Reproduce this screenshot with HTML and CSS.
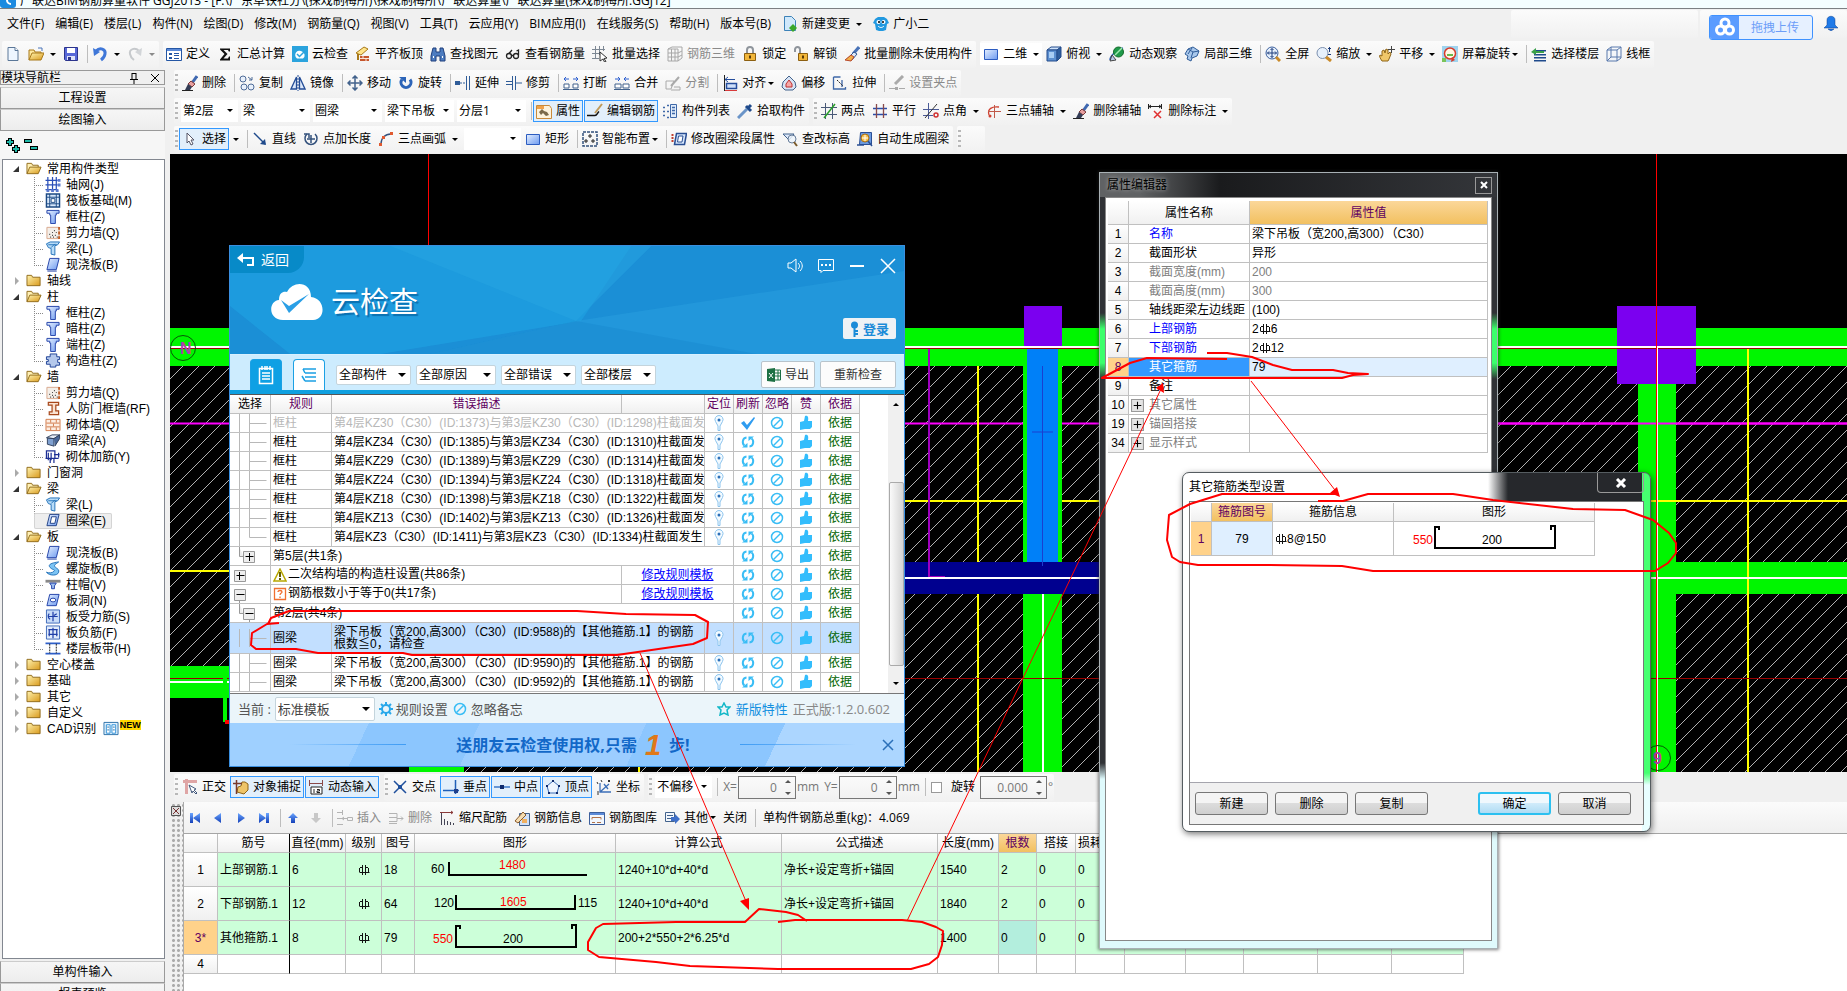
FILE: index.html
```html
<!DOCTYPE html>
<html lang="zh-CN">
<head>
    <meta charset="UTF-8">
    <meta name="viewport" content="width=device-width, initial-scale=1.0">
    <title>广联达BIM钢筋算量软件 GGJ2013</title>
    <link rel="stylesheet" href="styles.css">
</head>
<body>
<svg class="sprite" aria-hidden="true">
    <defs>
        <linearGradient id="gFold" x1="0" y1="0" x2="1" y2="1"><stop offset="0" stop-color="#fff3b0"/><stop offset="1" stop-color="#d99a1c"/></linearGradient>
        <linearGradient id="gBlue" x1="0" y1="0" x2="1" y2="1"><stop offset="0" stop-color="#e4efff"/><stop offset="1" stop-color="#6d9af0"/></linearGradient>
        <linearGradient id="gNav" x1="0" y1="0" x2="0" y2="1"><stop offset="0" stop-color="#6aa5ff"/><stop offset="1" stop-color="#1440b8"/></linearGradient>
        <pattern id="hatch" width="16" height="16" patternUnits="userSpaceOnUse" patternTransform="translate(5 0)"><path d="M-1 17L17-1" stroke="#b0b0b0" fill="none"/></pattern>
    </defs>
    <symbol id="i-new" viewBox="0 0 16 16"><path d="M3 1.500h7l3 3v10H3z" fill="#eef6ff" stroke="#5b7798"/><path d="M10 1.500v3h3" fill="#fff" stroke="#5b7798"/></symbol>
    <symbol id="i-open" viewBox="0 0 16 16"><path d="M1 14V4h5l1 2h6v2" fill="#ffe9a0" stroke="#a87818"/><path d="M1 14l3-7h12l-3 7z" fill="url(#gFold)" stroke="#a87818"/><path d="M10 2h4v3" fill="none" stroke="#4a74b8"/></symbol>
    <symbol id="i-save" viewBox="0 0 16 16"><path d="M1.500 1.500h13v13h-12l-1-1z" fill="#5868d8" stroke="#2c348c"/><path d="M4 2h8v5H4z" fill="#fff"/><path d="M4 10h8v4H4z" fill="#dfe3f8"/><path d="M5 11h3v3H5z" fill="#2c348c"/></symbol>
    <symbol id="i-undo" viewBox="0 0 16 16"><path d="M4 5c4-4 10-2 9 3-.5 3-2 4.500-4 6" fill="none" stroke="#3f77d8" stroke-width="3"/><path d="M1 2l1 8 6-4z" fill="#3f77d8"/></symbol>
    <symbol id="i-redo" viewBox="0 0 16 16"><path d="M12 5C8 1 2 3 3 8c.5 3 2 4.500 4 6" fill="none" stroke="#c6c9cc" stroke-width="2"/><path d="M15 2l-1 8-6-4z" fill="#d2d5d8"/></symbol>
    <symbol id="i-define" viewBox="0 0 16 16"><path d="M.500 2.500h15v12H.500z" fill="#fff" stroke="#2456a4"/><path d="M1 3h14v2H1z" fill="#5b8ad8"/><path d="M3 7h3v2H3zM3 11h3v2H3z" fill="#2456a4"/><path d="M8 7.500h5M8 9.500h5M8 12.500h5" stroke="#2456a4"/></symbol>
    <symbol id="i-sum" viewBox="0 0 16 16"><path d="M3 2.500h10v3h-1.200L11 4H6.500l4 4-4 4.500H11l1-2h1v4H3v-1L7.500 8 3 3.500z" fill="#111"/></symbol>
    <symbol id="i-cloudcheck" viewBox="0 0 16 16"><path d="M0 0h16v16H0z" fill="#2ba3dd"/><path d="M5 12.500a4 4 0 1 1 5-7 4 4 0 0 1 1 7z" fill="#fff"/><path d="M5 8l2.500 2.500L12 6" fill="none" stroke="#2ba3dd" stroke-width="1.500"/></symbol>
    <symbol id="i-slabtop" viewBox="0 0 16 16"><path d="M1 7l8-6 4 2-7 6z" fill="#ffe58a" stroke="#a8791a"/><path d="M5 10h9v5H5z" fill="#c6562c"/><path d="M5 12.500h9M8 10v2.500M11 12.500V15" stroke="#f8e6da"/><path d="M3 8v6" stroke="#a8791a" stroke-width="2"/></symbol>
    <symbol id="i-find" viewBox="0 0 16 16"><path d="M3 2h3v4h4V2h3l2 8v5h-5v-5H6v5H1v-5z" fill="#4d7cc0" stroke="#1f3f7c"/><path d="M3 11h1M12 11h1" stroke="#fff" stroke-width="2"/></symbol>
    <symbol id="i-glasses" viewBox="0 0 16 16"><g fill="none" stroke="#222" stroke-width="1.300"><circle cx="4" cy="10" r="2.500"/><circle cx="11" cy="10" r="2.500"/><path d="M6.500 9.500h2M4 7.500L7 4M13.500 9V4l-2 1"/></g></symbol>
    <symbol id="i-batch" viewBox="0 0 16 16"><path d="M0 3.500h13M0 7.500h8M3.500 0v13M7.500 0v9M11.500 0v5M0 12.500h7" stroke="#7d8894" fill="none"/><path d="M8 6l7 6-3 .500 2 3-1.500.500-1.500-3-3 2z" fill="#fff" stroke="#333"/></symbol>
    <symbol id="i-net3d" viewBox="0 0 16 16"><path d="M1 3l4-2h10v11l-4 3M1 3v12h10V3zM1 7h10l4-2M1 11h10l4-2M4.500 3v12M8 3v12" fill="none" stroke="#a8a8a8"/></symbol>
    <symbol id="i-lock" viewBox="0 0 16 16"><path d="M5 8V4a3 3 0 0 1 6 0v4" fill="none" stroke="#8f959c" stroke-width="2"/><path d="M2.500 7.500h11v7h-11z" fill="#f1b63a" stroke="#8c5f10"/><path d="M8 9.500v3" stroke="#5a3a06" stroke-width="2"/></symbol>
    <symbol id="i-unlock" viewBox="0 0 16 16"><path d="M2 6V3.500a2.500 2.500 0 0 1 5 0V8" fill="none" stroke="#8f959c" stroke-width="2"/><path d="M5.500 7.500h9v7h-9z" fill="#f1b63a" stroke="#8c5f10"/><path d="M10 9.500v3" stroke="#5a3a06" stroke-width="2"/></symbol>
    <symbol id="i-brush" viewBox="0 0 16 16"><path d="M15 1l-6 7" stroke="#4a74b8" stroke-width="3"/><path d="M10 6l3 2-5 6-5-1z" fill="#dfe9f6" stroke="#2f5590"/><path d="M7 9l3 2-3 4-6-1z" fill="#f2b04a" stroke="#b8482a"/></symbol>
    <symbol id="i-erase" viewBox="0 0 16 16"><path d="M15 1l-5 7" stroke="#3f68b0" stroke-width="3"/><path d="M9 6l4 3-3 3-4-3z" fill="#e8a0a0" stroke="#7c3a3a"/><path d="M6 9l4 3-2 3H3z" fill="#333c55"/><path d="M0 15.500h11" stroke="#222"/></symbol>
    <symbol id="i-rect" viewBox="0 0 16 16"><path d="M1.500 3.500h13v10h-13z" fill="url(#gBlue)" stroke="#2c5cc0"/></symbol>
    <symbol id="i-cube" viewBox="0 0 16 16"><path d="M1 4l4-3h10l-4 3z" fill="#cfe3fb" stroke="#254d8c"/><path d="M1 4h10v11H1z" fill="#5c8fd0" stroke="#254d8c"/><path d="M11 4l4-3v10l-4 4z" fill="#2f5d9c" stroke="#254d8c"/><path d="M3 6h5v6H3z" fill="#a9cdf4"/></symbol>
    <symbol id="i-orbit" viewBox="0 0 16 16"><path d="M1 14c0-4 6-10 13-12" fill="none" stroke="#2f61b8" stroke-width="1.500"/><circle cx="9.500" cy="6" r="5" fill="#1f9a4a" stroke="#156b2a"/><path d="M6 9l7-7" stroke="#9fe8b0" stroke-width="1.500"/><path d="M1 15l2-6 4 5z" fill="#b8c9e8" stroke="#444"/></symbol>
    <symbol id="i-local3d" viewBox="0 0 16 16"><path d="M1 8l3-5 5-2 6 4-2 5-5 2-1 3-4-2 1-3z" fill="#a9c8ec" stroke="#2f5c98"/><path d="M4 3l5 3-2 6M9 6l6-1M4 8l4-6" fill="none" stroke="#2f5c98"/></symbol>
    <symbol id="i-full" viewBox="0 0 16 16"><circle cx="7" cy="7" r="6" fill="#e6f0fc" stroke="#3b5f9c"/><path d="M11 11l4 4" stroke="#c98a2a" stroke-width="3"/><path d="M7 2.500v9M2.500 7h9M5.500 4L7 2.500 8.500 4M5.500 10L7 11.500 8.500 10M4 5.500L2.500 7 4 8.500M10 5.500L11.500 7 10 8.500" stroke="#1d3c7c" fill="none"/></symbol>
    <symbol id="i-zoom" viewBox="0 0 16 16"><circle cx="6.500" cy="7" r="5.500" fill="#e6f0fc" stroke="#7b8fae"/><path d="M10 11l5 4" stroke="#c98a2a" stroke-width="3"/><path d="M13.500 1v5M12 2.500h3M12 8.500h3" stroke="#1d3c7c"/></symbol>
    <symbol id="i-pan" viewBox="0 0 16 16"><path d="M3 15c-2-3-3-5-2-6l2 1V5l2-1 1 3 1-4 2 1v4l2-2 1 2-2 5-1 2z" fill="#f0c76a" stroke="#8f6516"/><path d="M12.500 0v7M9 3.500h7" stroke="#444"/></symbol>
    <symbol id="i-rotscreen" viewBox="0 0 16 16"><path d="M0 0h16v16H0z" fill="#9fd3ee"/><circle cx="8" cy="7.500" r="5.500" fill="#fff7e4" stroke="#d83a2a" stroke-width="1.500"/><path d="M5 8h6v2H5z" fill="#6ab84a"/><path d="M9 16l1-5 3 3z" fill="#d83a2a"/><path d="M0 12h4v4H0z" fill="#7ac45a"/></symbol>
    <symbol id="i-floors" viewBox="0 0 16 16"><path d="M3 4h12v1.500H3zM3 8h12v1.500H3zM3 11h12v1.500H3zM3 14h12v1.500H3z" fill="#1f4a8c"/><path d="M0 6l5-4v3h8v2H5v2z" fill="#3aa04a"/></symbol>
    <symbol id="i-wire" viewBox="0 0 16 16"><path d="M1 4l4-3h10v11l-4 3H1zM1 4h10v11M11 4l4-3M5 1v10h10M5 11l-4 4" fill="#f3f8ff" fill-opacity=".4" stroke="#5878ac"/></symbol>
    <symbol id="i-copy" viewBox="0 0 16 16"><g fill="#e8f0fb" stroke="#4f6c98"><circle cx="4" cy="4" r="3"/><circle cx="5" cy="12" r="3"/><circle cx="12" cy="12" r="3"/></g><path d="M9 2l4 3M13 2v3h-3" stroke="#4f6c98" fill="none"/></symbol>
    <symbol id="i-mirror" viewBox="0 0 16 16"><path d="M6.500 2v12H1zM9.500 2v12H15z" fill="#dce8fa" stroke="#234c96" stroke-width="1.300"/><path d="M8 0v16" stroke="#234c96" stroke-dasharray="2 1"/></symbol>
    <symbol id="i-move" viewBox="0 0 16 16"><path d="M8 1v14M1 8h14M5.500 3.500L8 1l2.500 2.500M5.500 12.500L8 15l2.500-2.500M3.500 5.500L1 8l2.500 2.500M12.500 5.500L15 8l-2.500 2.500" fill="none" stroke="#42628c" stroke-width="1.500"/></symbol>
    <symbol id="i-rotate" viewBox="0 0 16 16"><path d="M4 4.500a5 5 0 1 0 8 0" fill="none" stroke="#2c64b8" stroke-width="3"/><path d="M1 2h7v6z" fill="#2c64b8"/></symbol>
    <symbol id="i-extend" viewBox="0 0 16 16"><path d="M0 6h5v4H0z" fill="#2f5c98"/><path d="M5 8h5" stroke="#2f5c98" stroke-dasharray="2 1"/><path d="M11.500 1v14M14.500 1v14" stroke="#2f5c98"/></symbol>
    <symbol id="i-trim" viewBox="0 0 16 16"><path d="M0 6.500h6M0 9.500h6M10 8h6" stroke="#2f5c98"/><path d="M6.500 1v14M9.500 1v14" stroke="#2f5c98"/></symbol>
    <symbol id="i-break" viewBox="0 0 16 16"><path d="M1 9h5v4H1zM10 9h5v4h-5zM0 14.500h16" fill="#fff" stroke="#42628c"/><path d="M1 4h5M10 4h5M3 2L1 4l2 2M13 2l2 2-2 2" fill="none" stroke="#2c5fd0"/></symbol>
    <symbol id="i-merge" viewBox="0 0 16 16"><path d="M1 9h6v4H1zM9 9h6v4H9zM0 14.500h16" fill="#fff" stroke="#42628c"/><path d="M1 4h5M10 4h5M4 2l2 2-2 2M12 2l-2 2 2 2" fill="none" stroke="#2c5fd0"/></symbol>
    <symbol id="i-split" viewBox="0 0 16 16"><path d="M1 6h8l-3 8H1zM9 12h6v3H6" fill="none" stroke="#aaa"/><path d="M14 2L6 11" stroke="#aaa" stroke-width="2"/></symbol>
    <symbol id="i-align" viewBox="0 0 16 16"><path d="M2.500 0v16" stroke="#222"/><path d="M4.500 8.500h10v5h-10z" fill="#cfe0fa" stroke="#254d9c" stroke-width="1.500"/><path d="M3 4.500h10M6 2L3 4.500 6 7" fill="none" stroke="#254d9c"/><path d="M3 15.500h12" stroke="#d83a3a"/></symbol>
    <symbol id="i-offset" viewBox="0 0 16 16"><path d="M8 1l6 6 1 5-3 3H4l-3-3 1-5z" fill="#d8e4f5" stroke="#42628c"/><path d="M8 5l3 4v3H5V9z" fill="#f5a8a8" stroke="#c03030"/></symbol>
    <symbol id="i-stretch" viewBox="0 0 16 16"><path d="M1.500 2v12h12V12M1.500 2h7M10 5v7" fill="none" stroke="#3f68a8" stroke-width="1.300"/><path d="M5 5l6 6" stroke="#222" stroke-dasharray="2 1"/></symbol>
    <symbol id="i-grip" viewBox="0 0 16 16"><path d="M14 1L6 9" stroke="#aaa" stroke-width="3"/><path d="M0 13.500h6M10 13.500h6" stroke="#aaa"/><path d="M6 12h3v3H6z" fill="#aaa"/></symbol>
    <symbol id="i-prop" viewBox="0 0 16 16"><path d="M.500 2.500h13l2 3v10H.500z" fill="#fdf3dc" stroke="#c98a3a"/><path d="M1 3h7v3H1z" fill="#f0a24a"/><path d="M3 9l3-3 2 2 3 1 2 3-3 1-3-3-2 2z" fill="#7a6a4a"/></symbol>
    <symbol id="i-editbar" viewBox="0 0 16 16"><path d="M0 12.500h8c2 0 2-2 4-4" fill="none" stroke="#111" stroke-width="1.500"/><path d="M15 1l-7 9" stroke="#c09a5a" stroke-width="2"/></symbol>
    <symbol id="i-complist" viewBox="0 0 16 16"><path d="M8.500 1.500h6v13h-6z" fill="#e2edfb" stroke="#3f68a8"/><path d="M10 4.500h3M10 7.500h3M10 10.500h3M1 4.500h2M5 2.500h2M1 8.500h2M5 8.500h2M1 12.500h2M5 14.500h2" stroke="#3f68a8" stroke-width="1.500"/></symbol>
    <symbol id="i-pick" viewBox="0 0 16 16"><path d="M10 6l-7 7-2 2" stroke="#6a94c8" stroke-width="3"/><path d="M9 3l5 5M11 5l3-3" stroke="#1f4a8c" stroke-width="3"/></symbol>
    <symbol id="i-axis2" viewBox="0 0 16 16"><path d="M0 4.500h16M0 11.500h16M4.500 0v16M11.500 0v16" stroke="#4a5a78"/><path d="M3 15L14 1" stroke="#2aa02a" stroke-width="1.500"/></symbol>
    <symbol id="i-parallel" viewBox="0 0 16 16"><path d="M1 5.500h14M1 11.500h14" stroke="#2c4ca8" stroke-width="1.300"/><path d="M4.500 1v14M11.500 1v14" stroke="#8a4a4a" stroke-width="1.300"/></symbol>
    <symbol id="i-angle" viewBox="0 0 16 16"><path d="M0 6.500h16M0 12.500h10M5.500 0v16" stroke="#4a5a98"/><path d="M2 15L14 1" stroke="#333"/><circle cx="13" cy="12" r="2" fill="none" stroke="#d03030" stroke-width="1.500"/></symbol>
    <symbol id="i-axis3" viewBox="0 0 16 16"><path d="M3 12c-2-6 3-9 10-8" fill="none" stroke="#d04030" stroke-width="1.300"/><path d="M2 8.500h13M8.500 2v13" stroke="#c05a4a"/><circle cx="4" cy="13" r="1.500" fill="#d04030"/></symbol>
    <symbol id="i-deldim" viewBox="0 0 16 16"><path d="M.500 1v5M13.500 1v5M1 3.500h12M3 2L1 3.500 3 5M11 2l2 1.500L11 5" fill="none" stroke="#222"/><path d="M6 8l7 7M13 8l-7 7" stroke="#e03030" stroke-width="1.500"/></symbol>
    <symbol id="i-cursor" viewBox="0 0 16 16"><path d="M5 2v10l2-2 2 4 2-1-2-4h3z" fill="#fff" stroke="#556"/></symbol>
    <symbol id="i-line" viewBox="0 0 16 16"><path d="M2 2l11 11" stroke="#1f4a8c" stroke-width="1.500"/><path d="M14 14l-1-6-5 5z" fill="#1f4a8c"/></symbol>
    <symbol id="i-ptlen" viewBox="0 0 16 16"><path d="M4 3a6 6 0 1 0 8 0" fill="none" stroke="#33517c" stroke-width="1.500"/><path d="M8 4v8M4 8h8M1 3h5v4" fill="none" stroke="#33517c" stroke-width="1.500"/></symbol>
    <symbol id="i-arc" viewBox="0 0 16 16"><path d="M3 13C3 7 7 3 13 3" fill="none" stroke="#33517c" stroke-width="1.300"/><path d="M1 12h3v3H1zM4 5h3v3H4zM12 1h3v3h-3z" fill="#e05a30"/></symbol>
    <symbol id="i-smart" viewBox="0 0 16 16"><path d="M1 1h14v14H1z" fill="none" stroke="#33517c" stroke-width="1.500" stroke-dasharray="3 1"/><path d="M8 3v4M6 5h4M4 8v4M2 10h4M11 8v4M9 10h4" stroke="#222"/></symbol>
    <symbol id="i-segprop" viewBox="0 0 16 16"><path d="M5.500 2.500h10l-2 11h-10z" fill="#d6e6fb" stroke="#2a4f94" stroke-width="1.500"/><path d="M7.500 5h4.500l-1 6H6.500z" fill="#fff" stroke="#2a4f94"/><path d="M1.500 3v9" stroke="#c04030" stroke-width="2" stroke-dasharray="2 1"/></symbol>
    <symbol id="i-level" viewBox="0 0 16 16"><path d="M1 3h11L7 9z" fill="#dce8fa" stroke="#42628c"/><circle cx="10" cy="8" r="4" fill="#eef5fd" fill-opacity=".8" stroke="#667b98"/><path d="M12 11l3 4" stroke="#7a5a2a" stroke-width="2"/></symbol>
    <symbol id="i-auto" viewBox="0 0 16 16"><path d="M3.500 1.500h11v12h-12z" fill="#6a9ae0" stroke="#2a4f94"/><circle cx="8" cy="7" r="4" fill="#f5c04a" stroke="#a8701a"/><path d="M8 4v6M5 7h6" stroke="#fff"/><path d="M11 10l4 5M0 14h7" stroke="#2a4f94" stroke-width="1.500"/></symbol>
    <symbol id="i-change" viewBox="0 0 16 16"><path d="M2.500.500h7l4 4v10h-11z" fill="#cfe8fb" stroke="#3c82b8"/><path d="M11 8l4 4-4 4-4-4z" fill="#3aa82a"/></symbol>
    <symbol id="i-robot" viewBox="0 0 16 16"><path d="M2 3l3-2h6l3 2 2 4-2 1-1 6-3 1H6l-3-1-1-6-2-1z" fill="#2299e0"/><circle cx="5.500" cy="6" r="2" fill="#fff"/><circle cx="10.500" cy="6" r="2" fill="#fff"/><circle cx="6" cy="6" r="1"/><circle cx="10" cy="6" r="1"/><path d="M5 10c2 2 4 2 6 0" fill="none" stroke="#fff"/></symbol>
    <symbol id="i-bell" viewBox="0 0 16 16"><path d="M1 13l3-3V5c0-5 8-5 8 0v5l3 3zM5 14h6l-3 2z" fill="#1f7ae8" stroke="#0c3f8c" stroke-width=".500"/></symbol>
    <symbol id="i-baidu" viewBox="0 0 20 20"><g fill="none" stroke="#fff" stroke-width="3"><circle cx="10" cy="6" r="4"/><circle cx="5.500" cy="13" r="4"/><circle cx="14.500" cy="13" r="4"/></g></symbol>
    <symbol id="i-ortho" viewBox="0 0 16 16"><path d="M1 2.500h14M4.500 0v15" stroke="#dfa5a5" stroke-width="3"/><path d="M7 6l7 4-2 1 3 3-1 1-3-3-1 2z" fill="#fff" stroke="#445a7c"/></symbol>
    <symbol id="i-snap" viewBox="0 0 16 16"><path d="M4 13l1-5 3-1 1-4h3l3 2v6l-4 4z" fill="#eec468" stroke="#8f6516"/><path d="M0 4.500h9M3.500 1v14" stroke="#7a3a2a" stroke-width="1.500"/></symbol>
    <symbol id="i-dyn" viewBox="0 0 16 16"><path d="M1 4.500h14M1.500 1v6M14.500 1v6" stroke="#8a4a4a"/><path d="M3 8h11v7H3z" fill="#fff" stroke="#222"/><path d="M6 10v4M9 10.500h2.500v1.500H9v1.500h3" fill="none" stroke="#222"/></symbol>
    <symbol id="i-cross" viewBox="0 0 16 16"><path d="M2 2l12 12M14 2L2 14" stroke="#1f4f9c" stroke-width="1.500"/><path d="M6 6h4v4H6z" fill="#1f4f9c"/></symbol>
    <symbol id="i-perp" viewBox="0 0 16 16"><path d="M0 11.500h16M12.500 1v14" stroke="#1f5fb8" stroke-width="1.500"/><path d="M11 10h4v4h-4z" fill="#1f3f8c"/></symbol>
    <symbol id="i-mid" viewBox="0 0 16 16"><path d="M0 8h16" stroke="#3c78c8" stroke-width="1.500"/><path d="M6 6h4v4H6z" fill="#102a6c"/></symbol>
    <symbol id="i-vertex" viewBox="0 0 16 16"><path d="M8 2l6 5-2 7H4L2 7z" fill="#eef5ff" stroke="#3c6fb8"/><path d="M7 1h2v2H7zM1 6h2v2H1zM13 6h2v2h-2zM3 13h2v2H3zM11 13h2v2h-2z" fill="#102a6c"/></symbol>
    <symbol id="i-coord" viewBox="0 0 16 16"><path d="M4 4v9h11M4 13l9-8M8 5l4 5" fill="none" stroke="#3c6fb8" stroke-width="1.300"/><path d="M1 3l1 2M5 1l1 2M12 1l2 2M14 1l-2 2M1 13h2M1 15h2" stroke="#333"/></symbol>
    <symbol id="i-first" viewBox="0 0 16 16"><path d="M3 3h3v10H3zM13 3v10L6 8z" fill="url(#gNav)"/></symbol>
    <symbol id="i-prev" viewBox="0 0 16 16"><path d="M11 3v10L4 8z" fill="url(#gNav)"/></symbol>
    <symbol id="i-next" viewBox="0 0 16 16"><path d="M5 3v10l7-5z" fill="url(#gNav)"/></symbol>
    <symbol id="i-last" viewBox="0 0 16 16"><path d="M3 3v10l7-5zM10 3h3v10h-3z" fill="url(#gNav)"/></symbol>
    <symbol id="i-up" viewBox="0 0 16 16"><path d="M8 3l5 5h-3v5H6V8H3z" fill="url(#gNav)"/></symbol>
    <symbol id="i-down" viewBox="0 0 16 16"><path d="M8 13l5-5h-3V3H6v5H3z" fill="#c8c8c8"/></symbol>
    <symbol id="i-insert" viewBox="0 0 16 16"><path d="M0 2.500h6M0 8.500h5M0 14.500h6M5.500 0v5M5 8.500h5M7 7l-2 1.500L7 10M10.500 7.500h5v3h-5z" fill="none" stroke="#b4b4b4"/></symbol>
    <symbol id="i-remove" viewBox="0 0 16 16"><path d="M1 3.500h8v4H1M1 11.500h8v-4M1 13.500h8M9 8.500h6M13 6.500l2 2-2 2" stroke="#b4b4b4" fill="none"/></symbol>
    <symbol id="i-scale" viewBox="0 0 16 16"><path d="M2.500 2v13M5.500 9v6M8.500 11v4M11.500 12v3M14.500 13v2" stroke="#445"/><path d="M1 2.500h13M12 1l2 1.500L12 4" stroke="#8a3a3a" fill="none"/></symbol>
    <symbol id="i-barinfo" viewBox="0 0 16 16"><path d="M5.500 3.500h10v12h-10z" fill="#cfe0f8" stroke="#42628c"/><path d="M1 11l8-9 3 3-8 8z" fill="#f4dcb0" stroke="#8a5a2a"/><path d="M8 9h5v4H8z" fill="#f0b060"/></symbol>
    <symbol id="i-barlib" viewBox="0 0 16 16"><path d="M.500 2.500h15v12H.500z" fill="#f2f6fc" stroke="#3c5f9c"/><path d="M1 3h14v2H1z" fill="#5b8ad8"/><path d="M3 7.500h9M3 7.500v2M12 7.500v2M3 12.500h3M8 12.500h4" stroke="#b0724a"/></symbol>
    <symbol id="i-other" viewBox="0 0 16 16"><path d="M1.500 2.500h9v9h-9z" fill="#f2f6fc" stroke="#42628c"/><path d="M3 5.500h6M3 8.500h4" stroke="#42628c"/><path d="M7 7h4V4l5 5-5 5v-3H7z" fill="#3f6fc8"/></symbol>
    <symbol id="i-folder" viewBox="0 0 16 16"><path d="M.500 2.500h5l1 2h8v9h-14z" fill="url(#gFold)" stroke="#8f6a1a"/></symbol>
    <symbol id="i-folder-open" viewBox="0 0 16 16"><path d="M.500 13.500v-11h5l1 2h6v2" fill="#fff0b4" stroke="#8f6a1a"/><path d="M.500 13.500l3-7h12l-3 7z" fill="url(#gFold)" stroke="#8f6a1a"/></symbol>
    <symbol id="t-axis" viewBox="0 0 16 16"><path d="M0 3.500h13M0 8.500h13M0 13.500h13M2.500 0v14M7.500 0v14M11.500 0v14" stroke="#2a4fb8" stroke-width="1.300"/><path d="M13 2h3v3h-3zM13 7h3v3h-3zM1 13h3v3H1zM6 13h3v3H6zM11 13h3v3h-3z" fill="#5a7ad0"/></symbol>
    <symbol id="t-raft" viewBox="0 0 16 16"><path d="M1 1h14v14H1z" fill="#d7e8fb" stroke="#1c4a84" stroke-width="1.500"/><path d="M4.500 1v14M11.500 1v14M1 4.500h14M1 11.500h14" stroke="#1c4a84"/><path d="M6 6h4v4H6z" fill="#fff" stroke="#1c4a84"/></symbol>
    <symbol id="t-col" viewBox="0 0 16 16"><path d="M1.500 1.500h13v3h-3v2h-1v9h-5v-9h-1v-2h-3z" fill="url(#gBlue)" stroke="#1f3fa8"/></symbol>
    <symbol id="t-wall" viewBox="0 0 16 16"><path d="M1.500 2.500h13v12h-13z" fill="#f4efe9" stroke="#d8a68c"/><path d="M4 10h1M7 8h1M10 11h1M5 13h1M9 6h1M11 8h1M7 11h1M8 13h1M12 13h1" stroke="#444" stroke-width="1.300"/><path d="M14.500 2v13" stroke="#c0602a" stroke-dasharray="3 2" stroke-width="2"/></symbol>
    <symbol id="t-beam" viewBox="0 0 16 16"><path d="M1 3l4-2h10l-2 3-3 1v10l-4-1V8L3 7z" fill="#b8dcf8" stroke="#1f6fb8"/><path d="M3 4h9M6 7l4-4" stroke="#1f6fb8"/></symbol>
    <symbol id="t-slab" viewBox="0 0 16 16"><path d="M4.500 1.500h10l-3 12h-10z" fill="url(#gBlue)" stroke="#1f3fa8"/><path d="M2 15h10" stroke="#1f3fa8"/></symbol>
    <symbol id="t-gz" viewBox="0 0 16 16"><path d="M5 1h7v3h3v3h-2v3h2v3h-4v2H5v-3H1v-3h2V7H1V4h4z" fill="#b4c8ec" stroke="#1c3f94"/></symbol>
    <symbol id="t-rf" viewBox="0 0 16 16"><path d="M3 1.500h11v3h-3v6h3v4H4v-3h3v-7H3z" fill="#fbe3d2" stroke="#a8481c" stroke-width="1.300"/></symbol>
    <symbol id="t-brick" viewBox="0 0 16 16"><path d="M.500 2.500h15v12H.500z" fill="#fdeee2" stroke="#d07a4a"/><path d="M1 6.500h14M1 10.500h14M5.500 3v3M11.500 3v3M8.500 7v3M5.500 11v3M11.500 11v3" stroke="#d07a4a"/></symbol>
    <symbol id="t-anl" viewBox="0 0 16 16"><path d="M1 5l6-3h8l-6 4z" fill="#e8eef6" stroke="#2f3f5c"/><path d="M2 5.500l7 .500v8l-7-2z" fill="#7fa0d0" stroke="#2f3f5c"/><path d="M9 6l6-4v4l-5 8" fill="#4a6898" stroke="#2f3f5c"/></symbol>
    <symbol id="t-jj" viewBox="0 0 16 16"><path d="M1 2h9v8H1zM3 4v8M6 4v8M0 10h14M9 6h6M14 4v5M5 10v5M9 10v5" fill="none" stroke="#1c2f94" stroke-width="1.300"/></symbol>
    <symbol id="t-ring" viewBox="0 0 16 16"><path d="M4.500 1.500h10l-3 12h-10z" fill="url(#gBlue)" stroke="#1f3f84"/><path d="M6.500 4h5l-1.500 7H5z" fill="#fff" stroke="#1f3f84"/></symbol>
    <symbol id="t-spiral" viewBox="0 0 16 16"><path d="M14 1C6 2 2 4 5 7s6 2 4 4-5 2-8 1c3 4 12 4 13 0s-3-4-4-6 0-2 4-5z" fill="#7cc4f4" stroke="#1f6fb8"/></symbol>
    <symbol id="t-cap" viewBox="0 0 16 16"><path d="M0 3h16v3H0z" fill="#888"/><path d="M4.500 6.500h7l-2 3v3h-3v-3z" fill="#9fc0f0" stroke="#1f3fa8"/></symbol>
    <symbol id="t-hole" viewBox="0 0 16 16"><path d="M4.500 1.500h10l-3 12h-10z" fill="url(#gBlue)" stroke="#1f3fa8"/><ellipse cx="8" cy="7.500" rx="3" ry="2" fill="#fff" stroke="#1f3fa8"/></symbol>
    <symbol id="t-rebar" viewBox="0 0 16 16"><path d="M1 1h14v14H1z" fill="#c8dcf8" stroke="#3c66b8"/><path d="M8 3v10M3 8h10M4 5c-2 2-1 5 1 6M12 5l-3 2" fill="none" stroke="#1f3fa8" stroke-width="1.300"/></symbol>
    <symbol id="t-neg" viewBox="0 0 16 16"><path d="M1 1h14v14H1z" fill="#e2ecfb" stroke="#3c66b8"/><path d="M3 5h10M3 10h10M8 3v11M4 5v7M12 5v7" fill="none" stroke="#1f3fa8" stroke-width="1.300"/></symbol>
    <symbol id="t-band" viewBox="0 0 16 16"><path d="M0 2.500h16M0 13.500h16" stroke="#2f5fc8" stroke-width="2"/><path d="M4.500 3v10M11.500 3v10" stroke="#111" stroke-dasharray="2 1"/></symbol>
    <symbol id="t-cad" viewBox="0 0 16 16"><path d="M.500 1.500h15v13H.500z" fill="#e4f2fd" stroke="#2a6fa8"/><path d="M3 4h4v9H3zM9 4h4v9H9z" fill="#fff" stroke="#2a8fd8"/><path d="M4 6.500h2M4 9.500h2M10 6.500h2M10 9.500h2" stroke="#2a6fa8"/></symbol>
    <symbol id="c-pin" viewBox="0 0 16 16"><path d="M8 .500a4 4 0 0 1 3.500 6L9 11v4.500H7V11L4.500 6.500A4 4 0 0 1 8 .500z" fill="#f2faff" stroke="#8cc4ee"/><circle cx="8" cy="5" r="1.500" fill="#2b6fb8"/></symbol>
    <symbol id="c-check" viewBox="0 0 16 16"><path d="M1 8l3-2 3 4 7-8 1 1-8 12z" fill="#2f9cf0"/></symbol>
    <symbol id="c-ref" viewBox="0 0 16 16"><g fill="none" stroke="#39bdf5" stroke-width="2"><path d="M6.500 3.500C2 4 2 10 4.500 11.500"/><path d="M9.500 12.500C14 12 14 6 11.500 4.500"/></g><path d="M2 13.500h5.500V9zM14 2.500H8.500V7z" fill="#39bdf5"/></symbol>
    <symbol id="c-no" viewBox="0 0 16 16"><circle cx="8" cy="8" r="5.500" fill="none" stroke="#39bdf5" stroke-width="1.500"/><path d="M11.500 4.500l-7 7" stroke="#39bdf5" stroke-width="1.500"/></symbol>
    <symbol id="c-up" viewBox="0 0 16 16"><path d="M2 7l4-1 1-5c2-1 4 0 3 5h4v6l-2 2H7l-5 1z" fill="#33bdfc"/></symbol>
    <symbol id="tr-mid" viewBox="0 0 40 18"><path d="M9.500 0v18M19.500 0v18M19.500 9.500h17" stroke="#b8b8b8"/></symbol>
    <symbol id="tr-end" viewBox="0 0 40 18"><path d="M9.500 0v18M19.500 0v9.500h17" stroke="#b8b8b8" fill="none"/></symbol>
    <symbol id="tr-plus2" viewBox="0 0 40 18"><path d="M9.500 0v9.500h4M13.500 4.500h11v11h-11z" stroke="#999" fill="#eee"/><path d="M15.500 9.500h8M19.500 6v8" stroke="#000"/></symbol>
    <symbol id="tr-minus2" viewBox="0 0 40 18"><path d="M9.500 0v9.500h4M19.500 15v3M13.500 4.500h11v11h-11z" stroke="#999" fill="#eee"/><path d="M15.500 9.500h8" stroke="#000"/></symbol>
    <symbol id="tr-plus1" viewBox="0 0 40 18"><path d="M4.500 4.500h11v11h-11z" stroke="#999" fill="#eee"/><path d="M6.500 9.500h8M9.500 6v8" stroke="#000"/></symbol>
    <symbol id="tr-minus1" viewBox="0 0 40 18"><path d="M9.500 15v3M4.500 4.500h11v11h-11z" stroke="#999" fill="#eee"/><path d="M6.500 9.500h8" stroke="#000"/></symbol>
    <symbol id="i-plus" viewBox="0 0 12 12"><path d="M.500.500h11v11H.500z" stroke="#999" fill="#e4e4e4"/><path d="M2.500 6h7M6 2.500v7" stroke="#000" fill="none"/></symbol>
    <symbol id="i-grade" viewBox="0 0 12 12"><path d="M4.500 1v10M7.500 1v10M1.500 4v4M10.500 4v4M2 3.500h2M8 3.500h2M1.500 8.500h10" fill="none" stroke="#111"/></symbol>
    <symbol id="i-stirrup" viewBox="0 0 201 33"><path d="M45 8V5h-4v21h120V4h-4v4" fill="none" stroke="#000" stroke-width="2"/></symbol>
</svg>

<div class="app">
    <header class="titlebar"><svg class="logo" viewBox="0 0 16 16"><rect width="16" height="16" rx="3" fill="#1b8be0"/><path d="M11 4a4 4 0 1 0 0 8" fill="none" stroke="#fff" stroke-width="2"/></svg><span>广联达BIM钢筋算量软件 GGJ2013 - [F:\广东阜铁社分\(探戏制梅所)\探戏制梅所\广联达算量\广联达算量(探戏制梅所.GGJ12]</span></header>

    <nav class="menubar">
        <button>文件(F)</button><button>编辑(E)</button><button>楼层(L)</button><button>构件(N)</button><button>绘图(D)</button><button>修改(M)</button><button>钢筋量(Q)</button><button>视图(V)</button><button>工具(T)</button><button>云应用(Y)</button><button>BIM应用(I)</button><button>在线服务(S)</button><button>帮助(H)</button><button>版本号(B)</button>
        <button><svg class="ic"><use href="#i-change"/></svg>新建变更<i class="caret"></i></button>
        <button><svg class="ic"><use href="#i-robot"/></svg>广小二</button>
        <div class="menu-right"><div class="menu-blank"></div><div class="menu-tray"><svg class="ic"><use href="#i-bell"/></svg></div></div>
    </nav>

    <div class="toolrow main-tools">
        <div class="group">
            <button class="tool" aria-label="新建"><svg class="ic"><use href="#i-new"/></svg></button>
            <button class="tool" aria-label="打开"><svg class="ic"><use href="#i-open"/></svg><i class="caret"></i></button>
            <button class="tool" aria-label="保存"><svg class="ic"><use href="#i-save"/></svg></button>
            <span class="sep"></span>
            <button class="tool" aria-label="撤销"><svg class="ic"><use href="#i-undo"/></svg><i class="caret"></i></button>
            <button class="tool off" aria-label="恢复"><svg class="ic"><use href="#i-redo"/></svg><i class="caret"></i></button>
        </div>
        <div class="group">
            <button class="tool"><svg class="ic"><use href="#i-define"/></svg>定义</button>
            <button class="tool"><svg class="ic"><use href="#i-sum"/></svg>汇总计算</button>
            <button class="tool"><svg class="ic"><use href="#i-cloudcheck"/></svg>云检查</button>
            <button class="tool"><svg class="ic"><use href="#i-slabtop"/></svg>平齐板顶</button>
            <button class="tool"><svg class="ic"><use href="#i-find"/></svg>查找图元</button>
            <button class="tool"><svg class="ic"><use href="#i-glasses"/></svg>查看钢筋量</button>
            <button class="tool"><svg class="ic"><use href="#i-batch"/></svg>批量选择</button>
            <button class="tool off"><svg class="ic"><use href="#i-net3d"/></svg>钢筋三维</button>
            <button class="tool"><svg class="ic"><use href="#i-lock"/></svg>锁定</button>
            <button class="tool"><svg class="ic"><use href="#i-unlock"/></svg>解锁</button>
            <button class="tool"><svg class="ic"><use href="#i-brush"/></svg>批量删除未使用构件</button>
        </div>
        <div class="group">
            <button class="tool white"><svg class="ic"><use href="#i-rect"/></svg>二维<i class="caret"></i></button>
            <button class="tool"><svg class="ic"><use href="#i-cube"/></svg>俯视<i class="caret"></i></button>
            <button class="tool"><svg class="ic"><use href="#i-orbit"/></svg>动态观察</button>
            <button class="tool"><svg class="ic"><use href="#i-local3d"/></svg>局部三维</button>
            <span class="sep"></span>
            <button class="tool"><svg class="ic"><use href="#i-full"/></svg>全屏</button>
            <button class="tool"><svg class="ic"><use href="#i-zoom"/></svg>缩放<i class="caret"></i></button>
            <button class="tool"><svg class="ic"><use href="#i-pan"/></svg>平移<i class="caret"></i></button>
            <button class="tool"><svg class="ic"><use href="#i-rotscreen"/></svg>屏幕旋转<i class="caret near"></i></button>
            <span class="sep"></span>
            <button class="tool"><svg class="ic"><use href="#i-floors"/></svg>选择楼层</button>
            <button class="tool"><svg class="ic"><use href="#i-wire"/></svg>线框</button>
        </div>
    </div>

    <div class="body">
        <aside class="sidebar">
            <div class="side-title"><span>模块导航栏</span><svg width="12" height="12" viewBox="0 0 12 12"><path d="M4 1v6M8 1v6M4 1.500h4M2 7.500h8M6 8v4" stroke="#000" fill="none"/></svg><svg width="10" height="10" viewBox="0 0 10 10"><path d="M1 1l8 8M9 1L1 9" stroke="#000"/></svg></div>
            <button class="side-btn">工程设置</button>
            <button class="side-btn">绘图输入</button>
            <div class="side-tools"><svg width="36" height="18" viewBox="0 0 36 18"><path d="M4 1v8M0 5h8M10 8v8M6 12h8M18 4h8M24 11h8" stroke="#000" stroke-width="4"/><path d="M4 2v6M1 5h6M10 9v6M7 12h6M19 4h6M25 11h6" stroke="#1fb8a8" stroke-width="2"/></svg></div>
            <ul class="tree">
                <li class="open"><svg class="ic"><use href="#i-folder-open"/></svg>常用构件类型
                    <ul>
                        <li><svg class="ic"><use href="#t-axis"/></svg>轴网(J)</li>
                        <li><svg class="ic"><use href="#t-raft"/></svg>筏板基础(M)</li>
                        <li><svg class="ic"><use href="#t-col"/></svg>框柱(Z)</li>
                        <li><svg class="ic"><use href="#t-wall"/></svg>剪力墙(Q)</li>
                        <li><svg class="ic"><use href="#t-beam"/></svg>梁(L)</li>
                        <li><svg class="ic"><use href="#t-slab"/></svg>现浇板(B)</li>
                    </ul>
                </li>
                <li class="shut"><svg class="ic"><use href="#i-folder"/></svg>轴线</li>
                <li class="open"><svg class="ic"><use href="#i-folder-open"/></svg>柱
                    <ul>
                        <li><svg class="ic"><use href="#t-col"/></svg>框柱(Z)</li>
                        <li><svg class="ic"><use href="#t-col"/></svg>暗柱(Z)</li>
                        <li><svg class="ic"><use href="#t-col"/></svg>端柱(Z)</li>
                        <li><svg class="ic"><use href="#t-gz"/></svg>构造柱(Z)</li>
                    </ul>
                </li>
                <li class="open"><svg class="ic"><use href="#i-folder-open"/></svg>墙
                    <ul>
                        <li><svg class="ic"><use href="#t-wall"/></svg>剪力墙(Q)</li>
                        <li><svg class="ic"><use href="#t-rf"/></svg>人防门框墙(RF)</li>
                        <li><svg class="ic"><use href="#t-brick"/></svg>砌体墙(Q)</li>
                        <li><svg class="ic"><use href="#t-anl"/></svg>暗梁(A)</li>
                        <li><svg class="ic"><use href="#t-jj"/></svg>砌体加筋(Y)</li>
                    </ul>
                </li>
                <li class="shut"><svg class="ic"><use href="#i-folder"/></svg>门窗洞</li>
                <li class="open"><svg class="ic"><use href="#i-folder-open"/></svg>梁
                    <ul>
                        <li><svg class="ic"><use href="#t-beam"/></svg>梁(L)</li>
                        <li class="current"><svg class="ic"><use href="#t-ring"/></svg>圈梁(E)</li>
                    </ul>
                </li>
                <li class="open"><svg class="ic"><use href="#i-folder-open"/></svg>板
                    <ul>
                        <li><svg class="ic"><use href="#t-slab"/></svg>现浇板(B)</li>
                        <li><svg class="ic"><use href="#t-spiral"/></svg>螺旋板(B)</li>
                        <li><svg class="ic"><use href="#t-cap"/></svg>柱帽(V)</li>
                        <li><svg class="ic"><use href="#t-hole"/></svg>板洞(N)</li>
                        <li><svg class="ic"><use href="#t-rebar"/></svg>板受力筋(S)</li>
                        <li><svg class="ic"><use href="#t-neg"/></svg>板负筋(F)</li>
                        <li><svg class="ic"><use href="#t-band"/></svg>楼层板带(H)</li>
                    </ul>
                </li>
                <li class="shut"><svg class="ic"><use href="#i-folder"/></svg>空心楼盖</li>
                <li class="shut"><svg class="ic"><use href="#i-folder"/></svg>基础</li>
                <li class="shut"><svg class="ic"><use href="#i-folder"/></svg>其它</li>
                <li class="shut"><svg class="ic"><use href="#i-folder"/></svg>自定义</li>
                <li class="shut"><svg class="ic"><use href="#i-folder"/></svg>CAD识别 <svg class="ic cad-ic"><use href="#t-cad"/></svg><b class="new">NEW</b></li>
            </ul>
            <button class="side-btn">单构件输入</button>
            <button class="side-btn">报表预览</button>
        </aside>

        <main class="work">
            <div class="toolrow">
                <div class="group">
                    <span class="grip"></span>
                    <button class="tool"><svg class="ic"><use href="#i-erase"/></svg>删除</button><span class="sep"></span>
                    <button class="tool"><svg class="ic"><use href="#i-copy"/></svg>复制</button>
                    <button class="tool"><svg class="ic"><use href="#i-mirror"/></svg>镜像</button><span class="sep"></span>
                    <button class="tool"><svg class="ic"><use href="#i-move"/></svg>移动</button>
                    <button class="tool"><svg class="ic"><use href="#i-rotate"/></svg>旋转</button><span class="sep"></span>
                    <button class="tool"><svg class="ic"><use href="#i-extend"/></svg>延伸</button>
                    <button class="tool"><svg class="ic"><use href="#i-trim"/></svg>修剪</button><span class="sep"></span>
                    <button class="tool"><svg class="ic"><use href="#i-break"/></svg>打断</button>
                    <button class="tool"><svg class="ic"><use href="#i-merge"/></svg>合并</button>
                    <button class="tool off"><svg class="ic"><use href="#i-split"/></svg>分割</button><span class="sep"></span>
                    <button class="tool"><svg class="ic"><use href="#i-align"/></svg>对齐<i class="caret near"></i></button>
                    <button class="tool"><svg class="ic"><use href="#i-offset"/></svg>偏移</button>
                    <button class="tool"><svg class="ic"><use href="#i-stretch"/></svg>拉伸</button><span class="sep"></span>
                    <button class="tool off"><svg class="ic"><use href="#i-grip"/></svg>设置夹点</button>
                </div>
            </div>
            <div class="toolrow">
                <div class="group">
                    <span class="grip"></span>
                    <span class="combo short"><select aria-label="楼层"><option>第2层</option></select></span>
                    <span class="combo"><select aria-label="构件类别"><option>梁</option></select></span>
                    <span class="combo"><select aria-label="构件类型"><option>圈梁</option></select></span>
                    <span class="combo"><select aria-label="构件"><option>梁下吊板</option></select></span>
                    <span class="combo"><select aria-label="分层"><option>分层1</option></select></span>
                    <span class="sep"></span>
                    <button class="tool on"><svg class="ic"><use href="#i-prop"/></svg>属性</button>
                    <button class="tool on"><svg class="ic"><use href="#i-editbar"/></svg>编辑钢筋</button>
                    <button class="tool"><svg class="ic"><use href="#i-complist"/></svg>构件列表</button>
                    <button class="tool"><svg class="ic"><use href="#i-pick"/></svg>拾取构件</button>
                </div>
                <div class="group">
                    <span class="grip"></span>
                    <button class="tool"><svg class="ic"><use href="#i-axis2"/></svg>两点</button>
                    <button class="tool"><svg class="ic"><use href="#i-parallel"/></svg>平行</button>
                    <button class="tool"><svg class="ic"><use href="#i-angle"/></svg>点角<i class="caret"></i></button>
                    <button class="tool"><svg class="ic"><use href="#i-axis3"/></svg>三点辅轴<i class="caret"></i></button>
                    <button class="tool"><svg class="ic"><use href="#i-erase"/></svg>删除辅轴</button>
                    <button class="tool"><svg class="ic"><use href="#i-deldim"/></svg>删除标注<i class="caret"></i></button>
                </div>
            </div>
            <div class="toolrow">
                <div class="group">
                    <span class="grip"></span>
                    <button class="tool on"><svg class="ic"><use href="#i-cursor"/></svg>选择</button>
                    <button class="tool" aria-label="选择方式"><i class="caret solo"></i></button>
                    <span class="sep"></span>
                    <button class="tool"><svg class="ic"><use href="#i-line"/></svg>直线</button>
                    <button class="tool"><svg class="ic"><use href="#i-ptlen"/></svg>点加长度</button>
                    <button class="tool"><svg class="ic"><use href="#i-arc"/></svg>三点画弧<i class="caret"></i></button>
                    <span class="combo short"><select aria-label="弧线参数"><option></option></select></span>
                    <button class="tool"><svg class="ic"><use href="#i-rect"/></svg>矩形</button><span class="sep"></span>
                    <button class="tool"><svg class="ic"><use href="#i-smart"/></svg>智能布置<i class="caret near"></i></button><span class="sep"></span>
                    <button class="tool"><svg class="ic"><use href="#i-segprop"/></svg>修改圈梁段属性</button>
                    <button class="tool"><svg class="ic"><use href="#i-level"/></svg>查改标高</button>
                    <button class="tool"><svg class="ic"><use href="#i-auto"/></svg>自动生成圈梁</button>
                </div>
                <div class="group blank"><span class="grip"></span></div>
            </div>

            <svg class="cad">
                <g transform="translate(-170 -154)">
                    <path d="M170 366h230v300H170zM464 366h1383v406H464z" fill="url(#hatch)"/>
                    <path d="M170 423.500h1677" stroke="#f0f" stroke-width="2"/>
                    <path d="M170 571h60M904 501h943" stroke="#ff0" stroke-width="2"/>
                    <path d="M170 328h1677v38H170zM170 666h60v32h-60zM409 366h55v406h-55zM1023 366h39v406h-39zM1638 366h38v406h-38zM1638 562h209v32h-209z" fill="#00f600"/>
                    <path d="M1170 423.500h677" stroke="#f0f" stroke-width="2"/>
                    <path d="M1638 501h209M978 366v406M639 366v406M1748 347v425" stroke="#ff0" stroke-width="2"/>
                    <path d="M700 562h399v32H700z" fill="#00008f"/>
                    <path d="M1027 347h31v215h-31z" fill="#0080f8"/>
                    <path d="M1024 306h38v42h-38zM1617 306h79v78h-79z" fill="#7b00f0"/>
                    <path d="M929 347v230M929 347h16M929 577h16" stroke="#a000c0" stroke-width="2" fill="none"/>
                    <path d="M1042.500 366v200M1032 432h21" stroke="#1a3fd0"/>
                    <path d="M170 347h1677M170 682h60M904 578h943M1043 594v178" stroke="#fff" stroke-width="2"/>
                    <path d="M170 348.500h1677M170 678.500h1677" stroke="#900"/>
                    <path d="M428.500 154v92M1656.500 154v618" stroke="#f00"/>
                    <path d="M1657.500 348v424" stroke="#fff"/>
                    <path d="M225 673v49" stroke="#00f600" stroke-width="4"/><path d="M225 720h4v4h-4z" fill="#f00"/>
                    <circle cx="183" cy="348" r="12.500" fill="none" stroke="#075507"/>
                    <text x="180" y="354" class="axis-label">N</text>
                    <circle cx="1658" cy="758" r="12.500" fill="none" stroke="#075507"/>
                    <text x="1653" y="764" class="axis-label">9</text>
                </g>
            </svg>

            <div class="statusrow">
                <div class="group">
                    <span class="grip"></span>
                    <button class="tool"><svg class="ic"><use href="#i-ortho"/></svg>正交</button>
                    <button class="tool on"><svg class="ic"><use href="#i-snap"/></svg>对象捕捉</button>
                    <button class="tool on"><svg class="ic"><use href="#i-dyn"/></svg>动态输入</button>
                </div>
                <div class="group">
                    <span class="grip"></span>
                    <button class="tool"><svg class="ic"><use href="#i-cross"/></svg>交点</button>
                    <button class="tool on"><svg class="ic"><use href="#i-perp"/></svg>垂点</button>
                    <button class="tool on"><svg class="ic"><use href="#i-mid"/></svg>中点</button>
                    <button class="tool on"><svg class="ic"><use href="#i-vertex"/></svg>顶点</button>
                    <button class="tool"><svg class="ic"><use href="#i-coord"/></svg>坐标</button>
                </div>
                <div class="group offset-group">
                    <span class="grip"></span>
                    <span class="combo short"><select aria-label="偏移方式"><option>不偏移</option></select></span>
                    <span class="sep"></span>
                    <label for="off-x">X=</label><span class="spin"><input id="off-x" type="text" value="0"></span><span class="unit">mm</span>
                    <label for="off-y">Y=</label><span class="spin"><input id="off-y" type="text" value="0"></span><span class="unit">mm</span>
                    <span class="sep"></span>
                    <input id="rot" type="checkbox"><label class="dark" for="rot">旋转</label>
                    <span class="spin wide"><input type="text" value="0.000" aria-label="旋转角度"></span><span class="unit">°</span>
                </div>
            </div>

            <section class="editor">
                <div class="dock"><svg width="10" height="10" viewBox="0 0 10 10"><path d="M.500.500h9v9h-9z" fill="#ddd" stroke="#555"/><path d="M2 2l6 6M8 2L2 8" stroke="#733"/></svg></div>
                <div class="editor-main">
                    <div class="editbar">
                        <button class="tool" aria-label="首行"><svg class="ic"><use href="#i-first"/></svg></button>
                        <button class="tool" aria-label="上一行"><svg class="ic"><use href="#i-prev"/></svg></button>
                        <button class="tool" aria-label="下一行"><svg class="ic"><use href="#i-next"/></svg></button>
                        <button class="tool" aria-label="末行"><svg class="ic"><use href="#i-last"/></svg></button>
                        <span class="sep"></span>
                        <button class="tool" aria-label="上移"><svg class="ic"><use href="#i-up"/></svg></button>
                        <button class="tool" aria-label="下移"><svg class="ic"><use href="#i-down"/></svg></button>
                        <span class="sep"></span>
                        <button class="tool off"><svg class="ic"><use href="#i-insert"/></svg>插入</button>
                        <button class="tool off"><svg class="ic"><use href="#i-remove"/></svg>删除</button>
                        <button class="tool"><svg class="ic"><use href="#i-scale"/></svg>缩尺配筋</button>
                        <button class="tool"><svg class="ic"><use href="#i-barinfo"/></svg>钢筋信息</button>
                        <button class="tool"><svg class="ic"><use href="#i-barlib"/></svg>钢筋图库</button>
                        <button class="tool"><svg class="ic"><use href="#i-other"/></svg>其他<i class="caret near"></i></button>
                        <button class="tool">关闭</button>
                        <span class="sep"></span>
                        <span class="total">单构件钢筋总重(kg)：4.069</span>
                    </div>
                    <table class="grid rebar">
                        <colgroup><col style="width:34px"><col style="width:72px"><col style="width:56px"><col style="width:36px"><col style="width:33px"><col style="width:201px"><col style="width:166px"><col style="width:156px"><col style="width:61px"><col style="width:38px"><col style="width:39px"><col style="width:49px"><col style="width:61px"><col style="width:58px"><col style="width:74px"><col style="width:74px"><col style="width:72px"></colgroup>
                        <thead><tr><th></th><th>筋号</th><th>直径(mm)</th><th>级别</th><th>图号</th><th>图形</th><th>计算公式</th><th>公式描述</th><th>长度(mm)</th><th class="hot">根数</th><th>搭接</th><th class="left">损耗</th><th></th><th></th><th></th><th></th><th></th></tr></thead>
                        <tbody>
                            <tr><th>1</th><td>上部钢筋.1</td><td>6</td><td class="mid"><svg class="grade"><use href="#i-grade"/></svg></td><td>18</td>
                                <td class="shape"><svg width="201" height="33"><path d="M34 9v13h138" fill="none" stroke="#000" stroke-width="2"/><text x="16" y="20">60</text><text class="red" x="84" y="16">1480</text></svg></td>
                                <td>1240+10*d+40*d</td><td>净长+设定弯折+锚固</td><td>1540</td><td>2</td><td>0</td><td>0</td><td></td><td></td><td></td><td></td><td></td></tr>
                            <tr><th>2</th><td>下部钢筋.1</td><td>12</td><td class="mid"><svg class="grade"><use href="#i-grade"/></svg></td><td>64</td>
                                <td class="shape"><svg width="201" height="33"><path d="M41 8v14h119V8" fill="none" stroke="#000" stroke-width="2"/><text x="19" y="20">120</text><text class="red" x="85" y="19">1605</text><text x="163" y="20">115</text></svg></td>
                                <td>1240+10*d+40*d</td><td>净长+设定弯折+锚固</td><td>1840</td><td>2</td><td>0</td><td>0</td><td></td><td></td><td></td><td></td><td></td></tr>
                            <tr><th class="hot">3*</th><td>其他箍筋.1</td><td>8</td><td class="mid"><svg class="grade"><use href="#i-grade"/></svg></td><td>79</td>
                                <td class="shape"><svg width="201" height="33"><use href="#i-stirrup"/><text class="red" x="18" y="22">550</text><text x="88" y="22">200</text></svg></td>
                                <td>200+2*550+2*6.25*d</td><td></td><td>1400</td><td class="cell-on">0</td><td>0</td><td>0</td><td></td><td></td><td></td><td></td><td></td></tr>
                            <tr class="empty"><th>4</th><td></td><td></td><td></td><td></td><td></td><td></td><td></td><td></td><td></td><td></td><td></td><td></td><td></td><td></td><td></td><td></td></tr>
                        </tbody>
                    </table>
                </div>
            </section>
        </main>
    </div>
</div>

<button class="upload"><span class="upload-ic"><svg width="20" height="20"><use href="#i-baidu"/></svg></span><span>拖拽上传</span></button>

<section class="window cloud">
    <div class="cloud-head">
        <svg class="facets" viewBox="0 0 672 108" preserveAspectRatio="none"><path d="M0 0h400l-50 75-200 33H60L0 60z" fill="#1fa3e2" opacity=".6"/><path d="M160 0h260l-75 75z" fill="#27a6e2" opacity=".5"/><path d="M345 75l327-50v83H200z" fill="#2a9fe0" opacity=".5"/><path d="M345 75l180 33H200z" fill="#1585cc" opacity=".35"/></svg>
        <button class="back"><svg width="18" height="14" viewBox="0 0 18 14"><path d="M6 0v4h11v9h-7v-2h5V6H6v4L0 5z" fill="#fff"/></svg>返回</button>
        <div class="brand"><svg width="54" height="38" viewBox="0 0 54 38"><path d="M12 37C-3 37-3 18 8 17c0-8 5-9 8-8C22-3 40-2 40 14c14 1 16 22 2 23z" fill="#fff"/><path d="M10 17l8 13 20-19-20 12z" fill="#2a9fe6"/></svg>云检查</div>
        <div class="head-btns">
            <button aria-label="声音"><svg width="16" height="16" viewBox="0 0 16 16"><path d="M1 5h3l5-4v13l-5-4H1zM11 5c2 2 2 4 0 6M13 3c3 3 3 7 0 10" fill="none" stroke="#fff"/></svg></button>
            <button aria-label="消息"><svg width="16" height="16" viewBox="0 0 16 16"><path d="M.500 1.500h15v11H5l-2 2v-2H.500z" fill="none" stroke="#fff"/><path d="M3 7h2M7 7h2M11 7h2" stroke="#fff" stroke-width="2"/></svg></button>
            <button aria-label="最小化"><svg width="16" height="16" viewBox="0 0 16 16"><path d="M1 8h14" stroke="#fff" stroke-width="2"/></svg></button>
            <button aria-label="关闭"><svg width="16" height="16" viewBox="0 0 16 16"><path d="M1 1l14 14M15 1L1 15" stroke="#fff" stroke-width="1.500"/></svg></button>
        </div>
        <button class="login"><svg width="9" height="16" viewBox="0 0 9 16"><circle cx="4.500" cy="4" r="3.500" fill="#1b8bd8"/><path d="M4.500 6v10M5 10h3M5 13h3" stroke="#1b8bd8" stroke-width="2"/></svg>登录</button>
    </div>
    <div class="cloud-bar">
        <button class="tab on" aria-label="按错误查看"><svg width="16" height="20" viewBox="0 0 16 20"><path d="M1.500 3.500h13v15h-13zM4 8h8M4 11h8M4 14h8M4 1v4M7 1v4M9 1v4M12 1v4" fill="none" stroke="#fff" stroke-width="1.500"/></svg></button>
        <button class="tab" aria-label="按列表查看"><svg width="16" height="20" viewBox="0 0 16 20"><path d="M2 4h13M4 8h11M4 12h11M4 16h11M2 4l2 4M1 11l3 5" fill="none" stroke="#1ba0e4" stroke-width="1.500"/></svg></button>
        <span class="drop"><select aria-label="构件筛选"><option>全部构件</option></select></span>
        <span class="drop cause"><select aria-label="原因筛选"><option>全部原因</option></select></span>
        <span class="drop"><select aria-label="错误筛选"><option>全部错误</option></select></span>
        <span class="drop"><select aria-label="楼层筛选"><option>全部楼层</option></select></span>
        <button class="flat push"><svg width="14" height="14" viewBox="0 0 14 14"><path d="M0 1l8-1v14l-8-1z" fill="#1d7044"/><path d="M2 5l4 5M6 5l-4 5" stroke="#fff"/><path d="M8 2h5.500v10H8M8 5h5M8 8h5M11 2v10" fill="none" stroke="#1d7044"/></svg>导出</button>
        <button class="flat wide">重新检查</button>
    </div>
    <div class="cloud-list">
        <table class="grid errors">
            <colgroup><col style="width:41px"><col style="width:61px"><col style="width:290px"><col style="width:83px"><col style="width:29px"><col style="width:29px"><col style="width:29px"><col style="width:29px"><col style="width:39px"></colgroup>
            <thead><tr><th class="plain">选择</th><th>规则</th><th>错误描述</th><th></th><th>定位</th><th>刷新</th><th>忽略</th><th>赞</th><th>依据</th></tr></thead>
            <tbody>
                <tr class="done"><td class="br"><svg><use href="#tr-mid"/></svg></td><td>框柱</td><td colspan="2">第4层KZ30（C30）(ID:1373)与第3层KZ30（C30）(ID:1298)柱截面发</td><td class="act"><svg><use href="#c-pin"/></svg></td><td class="act"><svg><use href="#c-check"/></svg></td><td class="act"><svg><use href="#c-no"/></svg></td><td class="act"><svg><use href="#c-up"/></svg></td><td class="why">依据</td></tr>
                <tr><td class="br"><svg><use href="#tr-mid"/></svg></td><td>框柱</td><td colspan="2">第4层KZ34（C30）(ID:1385)与第3层KZ34（C30）(ID:1310)柱截面发</td><td class="act"><svg><use href="#c-pin"/></svg></td><td class="act"><svg><use href="#c-ref"/></svg></td><td class="act"><svg><use href="#c-no"/></svg></td><td class="act"><svg><use href="#c-up"/></svg></td><td class="why">依据</td></tr>
                <tr><td class="br"><svg><use href="#tr-mid"/></svg></td><td>框柱</td><td colspan="2">第4层KZ29（C30）(ID:1389)与第3层KZ29（C30）(ID:1314)柱截面发</td><td class="act"><svg><use href="#c-pin"/></svg></td><td class="act"><svg><use href="#c-ref"/></svg></td><td class="act"><svg><use href="#c-no"/></svg></td><td class="act"><svg><use href="#c-up"/></svg></td><td class="why">依据</td></tr>
                <tr><td class="br"><svg><use href="#tr-mid"/></svg></td><td>框柱</td><td colspan="2">第4层KZ24（C30）(ID:1394)与第3层KZ24（C30）(ID:1318)柱截面发</td><td class="act"><svg><use href="#c-pin"/></svg></td><td class="act"><svg><use href="#c-ref"/></svg></td><td class="act"><svg><use href="#c-no"/></svg></td><td class="act"><svg><use href="#c-up"/></svg></td><td class="why">依据</td></tr>
                <tr><td class="br"><svg><use href="#tr-mid"/></svg></td><td>框柱</td><td colspan="2">第4层KZ18（C30）(ID:1398)与第3层KZ18（C30）(ID:1322)柱截面发</td><td class="act"><svg><use href="#c-pin"/></svg></td><td class="act"><svg><use href="#c-ref"/></svg></td><td class="act"><svg><use href="#c-no"/></svg></td><td class="act"><svg><use href="#c-up"/></svg></td><td class="why">依据</td></tr>
                <tr><td class="br"><svg><use href="#tr-mid"/></svg></td><td>框柱</td><td colspan="2">第4层KZ13（C30）(ID:1402)与第3层KZ13（C30）(ID:1326)柱截面发</td><td class="act"><svg><use href="#c-pin"/></svg></td><td class="act"><svg><use href="#c-ref"/></svg></td><td class="act"><svg><use href="#c-no"/></svg></td><td class="act"><svg><use href="#c-up"/></svg></td><td class="why">依据</td></tr>
                <tr><td class="br"><svg><use href="#tr-end"/></svg></td><td>框柱</td><td colspan="2">第4层KZ3（C30）(ID:1411)与第3层KZ3（C30）(ID:1334)柱截面发生</td><td class="act"><svg><use href="#c-pin"/></svg></td><td class="act"><svg><use href="#c-ref"/></svg></td><td class="act"><svg><use href="#c-no"/></svg></td><td class="act"><svg><use href="#c-up"/></svg></td><td class="why">依据</td></tr>
                <tr><td class="br"><svg><use href="#tr-plus2"/></svg></td><td colspan="4">第5层(共1条)</td><td class="act"><svg><use href="#c-ref"/></svg></td><td class="act"><svg><use href="#c-no"/></svg></td><td class="act"><svg><use href="#c-up"/></svg></td><td class="why">依据</td></tr>
                <tr><td class="br"><svg><use href="#tr-plus1"/></svg></td><td colspan="2"><svg class="lead" viewBox="0 0 14 14"><path d="M7 1l6 12H1z" fill="#fff" stroke="#b8a800" stroke-width="1.500"/><path d="M7 4v5M7 10v2" stroke="#665c00" stroke-width="2"/></svg>二次结构墙的构造柱设置(共86条)</td><td colspan="2" class="mid"><a href="#">修改规则模板</a></td><td class="act"><svg><use href="#c-ref"/></svg></td><td class="act"><svg><use href="#c-no"/></svg></td><td class="act"><svg><use href="#c-up"/></svg></td><td class="why">依据</td></tr>
                <tr><td class="br"><svg><use href="#tr-minus1"/></svg></td><td colspan="2"><svg class="lead" viewBox="0 0 14 14"><path d="M1.500 1.500h11v11h-11z" fill="#fff" stroke="#f07030" stroke-width="1.300"/><path d="M5 5c0-2 4-2 4 0 0 1-2 1-2 3M7 9.500V11" fill="none" stroke="#f07030" stroke-width="1.300"/></svg>钢筋根数小于等于0(共17条)</td><td colspan="2" class="mid"><a href="#">修改规则模板</a></td><td class="act"><svg><use href="#c-ref"/></svg></td><td class="act"><svg><use href="#c-no"/></svg></td><td class="act"><svg><use href="#c-up"/></svg></td><td class="why">依据</td></tr>
                <tr><td class="br"><svg><use href="#tr-minus2"/></svg></td><td colspan="4">第2层(共4条)</td><td class="act"><svg><use href="#c-ref"/></svg></td><td class="act"><svg><use href="#c-no"/></svg></td><td class="act"><svg><use href="#c-up"/></svg></td><td class="why">依据</td></tr>
                <tr class="picked"><td class="br"><svg><use href="#tr-mid"/></svg></td><td>圈梁</td><td colspan="2">梁下吊板（宽200,高300）（C30）(ID:9588)的【其他箍筋.1】的钢筋<br>根数≦0，请检查</td><td class="act"><svg><use href="#c-pin"/></svg></td><td class="act"><svg><use href="#c-ref"/></svg></td><td class="act"><svg><use href="#c-no"/></svg></td><td class="act"><svg><use href="#c-up"/></svg></td><td class="why">依据</td></tr>
                <tr><td class="br"><svg><use href="#tr-mid"/></svg></td><td>圈梁</td><td colspan="2">梁下吊板（宽200,高300）（C30）(ID:9590)的【其他箍筋.1】的钢筋</td><td class="act"><svg><use href="#c-pin"/></svg></td><td class="act"><svg><use href="#c-ref"/></svg></td><td class="act"><svg><use href="#c-no"/></svg></td><td class="act"><svg><use href="#c-up"/></svg></td><td class="why">依据</td></tr>
                <tr><td class="br"><svg><use href="#tr-mid"/></svg></td><td>圈梁</td><td colspan="2">梁下吊板（宽200,高300）（C30）(ID:9592)的【其他箍筋.1】的钢筋</td><td class="act"><svg><use href="#c-pin"/></svg></td><td class="act"><svg><use href="#c-ref"/></svg></td><td class="act"><svg><use href="#c-no"/></svg></td><td class="act"><svg><use href="#c-up"/></svg></td><td class="why">依据</td></tr>
            </tbody>
        </table>
        <div class="scroll"><i class="caret solo flip"></i><span class="thumb"></span><i class="caret solo"></i></div>
    </div>
    <div class="cloud-status">
        <label for="tpl">当前 :</label><span class="drop long"><select id="tpl"><option>标准模板</option></select></span>
        <button class="link-btn"><svg width="14" height="14" viewBox="0 0 14 14"><circle cx="7" cy="7" r="4" fill="none" stroke="#29a8ea" stroke-width="2"/><path d="M7 0v3M7 11v3M0 7h3M11 7h3M2 2l2 2M10 10l2 2M12 2l-2 2M4 10l-2 2" stroke="#29a8ea" stroke-width="2"/></svg>规则设置</button>
        <button class="link-btn"><svg width="16" height="16"><use href="#c-no"/></svg>忽略备忘</button>
        <span class="version"><svg width="14" height="14" viewBox="0 0 14 14"><path d="M7 1l2 4h4l-3 3 1 5-4-2-4 2 1-5-3-3h4z" fill="none" stroke="#12b8c8" stroke-width="1.500"/></svg><a href="#">新版特性</a> 正式版:1.2.0.602</span>
    </div>
    <div class="promo">
        <span class="rule"></span><p>送朋友云检查使用权,只需<em>1</em>步!</p><span class="rule flip"></span>
        <button aria-label="关闭提示"><svg width="12" height="12" viewBox="0 0 12 12"><path d="M1 1l10 10M11 1L1 11" stroke="#2a6fb8" stroke-width="1.500"/></svg></button>
    </div>
</section>

<section class="window props">
    <div class="props-title"><span>属性编辑器</span><button aria-label="关闭"><svg width="8" height="8" viewBox="0 0 8 8"><path d="M1 1l6 6M7 1L1 7" stroke="#fff" stroke-width="2"/></svg></button></div>
    <div class="props-body">
        <table class="grid proptable">
            <colgroup><col style="width:21px"><col style="width:121px"><col></colgroup>
            <thead><tr><th></th><th>属性名称</th><th class="hot">属性值</th></tr></thead>
            <tbody>
                <tr><th>1</th><td class="name blue">名称</td><td>梁下吊板（宽200,高300）（C30）</td></tr>
                <tr><th>2</th><td class="name">截面形状</td><td>异形</td></tr>
                <tr class="gray"><th>3</th><td class="name">截面宽度(mm)</td><td>200</td></tr>
                <tr class="gray"><th>4</th><td class="name">截面高度(mm)</td><td>300</td></tr>
                <tr><th>5</th><td class="name">轴线距梁左边线距</td><td>(100)</td></tr>
                <tr><th>6</th><td class="name blue">上部钢筋</td><td>2<svg class="grade"><use href="#i-grade"/></svg>6</td></tr>
                <tr><th>7</th><td class="name blue">下部钢筋</td><td>2<svg class="grade"><use href="#i-grade"/></svg>12</td></tr>
                <tr class="active"><th class="hot">8</th><td class="name">其它箍筋</td><td>79</td></tr>
                <tr><th>9</th><td class="name">备注</td><td></td></tr>
                <tr class="gray"><th>10</th><td class="name sub"><svg><use href="#i-plus"/></svg>其它属性</td><td></td></tr>
                <tr class="gray"><th>19</th><td class="name sub"><svg><use href="#i-plus"/></svg>锚固搭接</td><td></td></tr>
                <tr class="gray"><th>34</th><td class="name sub"><svg><use href="#i-plus"/></svg>显示样式</td><td></td></tr>
            </tbody>
        </table>
    </div>
</section>

<section class="window stirrup">
    <div class="stirrup-title"><span>其它箍筋类型设置</span><button aria-label="关闭"><svg width="12" height="10" viewBox="0 0 12 10"><path d="M2 1l8 8M10 1L2 9" stroke="#fff" stroke-width="3"/></svg></button></div>
    <div class="stirrup-body">
        <div class="stirrup-list">
            <table class="grid stirrup-table">
                <colgroup><col style="width:21px"><col style="width:61px"><col style="width:121px"><col style="width:201px"></colgroup>
                <thead><tr><th></th><th class="hot">箍筋图号</th><th>箍筋信息</th><th>图形</th></tr></thead>
                <tbody><tr><th class="hot">1</th><td class="mid sel">79</td><td><svg class="grade"><use href="#i-grade"/></svg>8@150</td><td class="shape"><svg width="201" height="33"><use href="#i-stirrup"/><text class="red" x="19" y="22">550</text><text x="88" y="22">200</text></svg></td></tr></tbody>
            </table>
        </div>
        <div class="stirrup-btns"><button>新建</button><button>删除</button><button>复制</button><button class="default">确定</button><button>取消</button></div>
    </div>
</section>

<svg class="marks" aria-hidden="true">
    <g fill="none" stroke="#f00" stroke-width="2" stroke-linejoin="round">
        <path d="M279 623l-12 1-15 9-1 12 5 4h40l22 4h85l9 2h205l76-11 14-6 1-16-13-7-69-1-49-3H289l-18 7-3 6"/>
        <path d="M1207 353h20l25 4 21 8 19 5h41l15 3 20 1-15 1-11 3H1102l28-15 17-5 80 1"/>
        <path d="M1318 501h25l25-7h85l40 6 80 9 52 1 28 10 16 13 7 10v10l-8 10-13 8h-282l-31-5-77-1h-67l-18-3-8-5-5-17 2-25 21-11 32-10h116"/>
        <path d="M807 921l-9-6-12-3-27-3-14 13h-69l-73 2-7 4-8 14v8l11 7 57 5 34 4 88 3h133l18-5 9-7 4-12 1-14-7-4-14-5-20-2H795l-17 2"/>
    </g>
    <g fill="none" stroke="#f00"><path d="M640 653l108 253M907 921l254-532M1251 381l87 113"/></g>
    <path d="M749 910l-9-9 9-3zM1163 383l1 10-8-5zM1340 497l-10-4 7-6z" fill="#f00"/>
</svg>
</body>
</html>
```
FILE: styles.css
```css
* {
    box-sizing: border-box;
}
body {
    margin: 0;
    height: 100vh;
    overflow: hidden;
    background: #f0f0f0;
    color: #000;
    font: 12px/16px "Open Sans", "Noto Sans CJK SC", sans-serif;
}
button, select, input {
    font: inherit;
    color: inherit;
    margin: 0;
}
button {
    display: flex;
    align-items: center;
    gap: 4px;
    padding: 0;
    border: 0;
    background: none;
    white-space: nowrap;
}
ul {
    list-style: none;
    margin: 0;
    padding: 0;
}
svg {
    flex: none;
}
.sprite {
    position: absolute;
    width: 0;
    height: 0;
}
.ic {
    width: 16px;
    height: 16px;
}
.caret {
    flex: none;
    border: 3px solid transparent;
    border-top-color: #000;
    border-bottom: 0;
    margin-left: 2px;
}
.caret.near {
    margin-left: -2px;
}
.caret.solo {
    margin: 0;
}
.caret.flip {
    transform: rotate(180deg);
}
.app {
    display: flex;
    flex-direction: column;
    height: 100%;
}

/* title and menu */
.titlebar {
    display: flex;
    align-items: flex-end;
    gap: 4px;
    height: 9px;
    overflow: hidden;
    background: #f4feff;
    border-bottom: 1px solid #7c8083;
    line-height: 14px;
    white-space: nowrap;
}
.logo {
    width: 16px;
    height: 16px;
}
.menubar {
    display: flex;
    align-items: center;
    gap: 11px;
    height: 30px;
    padding-left: 7px;
}
.menu-right {
    display: flex;
    gap: 2px;
    margin-left: auto;
    height: 28px;
}
.menu-blank, .menu-tray, .group {
    background: linear-gradient(#fbfbfb, #f1f1f1);
    border-radius: 2px;
}
.menu-blank {
    width: 187px;
}
.menu-tray {
    width: 147px;
    padding: 5px 8px;
    text-align: right;
}

/* toolbars */
.toolrow, .statusrow {
    display: flex;
    align-items: center;
    gap: 4px;
    height: 28px;
    flex: none;
}
.main-tools {
    height: 30px;
    padding-left: 2px;
}
.work .toolrow, .statusrow {
    padding-left: 4px;
}
.group {
    display: flex;
    align-items: center;
    gap: 1px;
    height: 27px;
    padding-right: 1px;
}
.group.blank {
    width: 28px;
}
.grip {
    width: 3px;
    height: 18px;
    margin-left: 1px;
    background: repeating-linear-gradient(#b8b8b8 0 2px, transparent 2px 5px);
}
.sep {
    width: 1px;
    height: 18px;
    margin-left: 4px;
    background: #bdbdbd;
}
.tool {
    height: 22px;
    padding: 0 2px;
    border: 1px solid transparent;
}
.tool.on {
    border-color: #3399ff;
    background: #e2effb;
}
.tool.white {
    background: #fff;
}
.tool.off {
    color: #8a8a8a;
}
.tool.off .caret {
    border-top-color: #8a8a8a;
}
.combo, .drop {
    position: relative;
    display: block;
}
.combo {
    width: 69px;
    height: 22px;
    margin-left: 2px;
    background: #fff;
}
.combo.short {
    width: 57px;
}
.combo::after, .drop::after {
    content: "";
    position: absolute;
    right: 5px;
    top: 9px;
    border: 3px solid transparent;
    border-top-color: #000;
    border-bottom: 0;
}
.combo select, .drop select {
    appearance: none;
    width: 100%;
    height: 100%;
    padding: 0 0 0 2px;
    border: 0;
    background: none;
}

/* left panel */
.body {
    display: flex;
    flex: 1;
    min-height: 0;
}
.sidebar {
    display: flex;
    flex-direction: column;
    width: 165px;
    flex: none;
    /* the last button runs off the bottom of the window */
    margin-bottom: -14px;
    padding-top: 1px;
    overflow: hidden;
    font-family: "Liberation Sans", "Noto Sans CJK SC", sans-serif;
}
.side-title {
    display: flex;
    align-items: center;
    gap: 10px;
    height: 15px;
    padding-right: 4px;
    border: 1px solid #999;
    flex: none;
}
.side-title span {
    flex: 1;
}
.side-btn {
    justify-content: center;
    height: 22px;
    flex: none;
    border: 1px solid #999;
    border-top-color: #ccc;
    background: linear-gradient(#f6f6f6, #ededed);
}
.side-title + .side-btn {
    margin-top: 2px;
}
.side-tools {
    height: 28px;
    padding: 6px;
    background: #f6f6f6;
    flex: none;
}
.tree {
    flex: 1;
    min-height: 0;
    overflow: hidden;
    margin: 0 0 2px 2px;
    padding-top: 1px;
    background: #fff;
    border: 1px solid #828790;
    line-height: 16px;
    white-space: nowrap;
}
.tree .ic {
    height: 15px;
    margin-right: 5px;
    vertical-align: top;
}
.tree > li {
    position: relative;
    padding-left: 23px;
}
.tree > li::before {
    content: "";
    position: absolute;
    left: 10px;
    top: 5px;
}
.tree > .open::before {
    border: 3px solid #333;
    border-top-color: transparent;
    border-left-color: transparent;
}
.tree > .shut::before {
    top: 4px;
    left: 12px;
    border: 4px solid transparent;
    border-left-color: #aaa;
    border-right: 0;
}
.tree ul {
    margin-left: 8px;
    background: repeating-linear-gradient(#888 0 1px, transparent 1px 2px) 0 0 / 1px calc(100% - 8px) no-repeat;
}
.tree ul li {
    padding-left: 11px;
    background: repeating-linear-gradient(90deg, #888 0 1px, transparent 1px 2px) 0 8px / 10px 1px no-repeat;
}
.tree .current {
    width: 78px;
    border-radius: 2px;
    background: #eee;
    box-shadow: inset 0 0 0 1px #d4d4d4;
}
.tree .cad-ic {
    margin: 0 1px 0 3px;
}
.new {
    font: bold 9px/9px "Liberation Sans", sans-serif;
    vertical-align: top;
    background: #ffd800;
}

/* drawing area */
.work {
    display: flex;
    flex-direction: column;
    flex: 1;
    min-width: 0;
    padding-left: 5px;
}
.cad {
    flex: 1;
    width: 100%;
    min-height: 0;
    margin-top: 1px;
    background: #000;
}
.axis-label {
    font: bold 16px "Liberation Sans", sans-serif;
    fill: #b040b0;
}
.statusrow {
    height: 30px;
}
.offset-group label, .unit {
    color: #777;
}
.offset-group label {
    margin-left: 4px;
}
.offset-group .dark {
    color: #000;
    margin: 0 4px 0 8px;
}
.spin {
    position: relative;
    width: 58px;
    height: 23px;
    border: 1px solid #777;
}
.spin.wide {
    width: 67px;
}
.spin input {
    width: 100%;
    height: 21px;
    padding: 0 18px 0 0;
    border: 0;
    background: none;
    text-align: right;
    color: #777;
}
.spin::before, .spin::after {
    content: "";
    position: absolute;
    right: 4px;
    border: 3px solid transparent;
}
.spin::before {
    top: 3px;
    border-bottom-color: #555;
    border-top: 0;
}
.spin::after {
    bottom: 3px;
    border-top-color: #555;
    border-bottom: 0;
}
.offset-group input[type="checkbox"] {
    width: 11px;
    height: 11px;
    margin-left: 4px;
    appearance: none;
    border: 1px solid #999;
    background: #fff;
}

/* rebar editor */
.editor {
    display: flex;
    height: 189px;
    flex: none;
}
.dock {
    width: 13px;
    padding: 2px 1px;
    background: radial-gradient(circle, #aaa 1px, transparent 2px) 1px 16px / 5px 5px;
}
.editor-main {
    flex: 1;
    min-width: 0;
    overflow: hidden;
    background: #fff;
    border-left: 1px solid #aaa;
}
.editbar {
    display: flex;
    align-items: center;
    gap: 1px;
    height: 32px;
    background: linear-gradient(#fbfbfb, #f0f0f0);
    border-bottom: 1px solid #a5a5a5;
}
.total {
    margin-left: 6px;
}
.grid {
    table-layout: fixed;
    border-collapse: separate;
    border-spacing: 0;
    font: 12px/12px "Liberation Sans", "Noto Sans CJK SC", sans-serif;
}
.grid th, .grid td {
    height: 19px;
    padding: 0 2px;
    border-right: 1px solid #c0c0c0;
    border-bottom: 1px solid #c0c0c0;
    overflow: hidden;
    white-space: nowrap;
    text-align: left;
}
.grid th {
    padding: 0;
    text-align: center;
    font-weight: normal;
    background: linear-gradient(#fff, #f0f0f0);
}
.grid th.hot {
    background: #ffd28a;
    color: #600060;
}
.grid thead th.hot {
    background: linear-gradient(#fbd799, #f2c060);
}
.grid .mid {
    text-align: center;
}
.grid .shape {
    padding: 0;
}
.shape svg {
    display: block;
}
.grade {
    width: 12px;
    height: 12px;
    vertical-align: top;
}
.red {
    fill: #f00;
}
.rebar {
    width: 1280px;
}
.rebar tbody tr {
    height: 34px;
}
.rebar tbody td {
    background: #ccffd9;
}
.rebar tbody tr.empty {
    height: 19px;
}
.rebar .empty td {
    background: #fff;
}
.rebar thead th.left {
    text-align: left;
    padding-left: 2px;
}
.rebar tr > :nth-child(2) {
    border-right-color: #000;
}
.rebar td.cell-on {
    background: #b3eedd;
}

/* floating windows */
.window {
    position: absolute;
    display: flex;
    flex-direction: column;
}
.upload {
    position: absolute;
    left: 1709px;
    top: 15px;
    width: 104px;
    height: 25px;
    gap: 12px;
    overflow: hidden;
    border: 1px solid #3f92ff;
    border-radius: 3px;
    background: #e6f0ff;
    color: #6c9df8;
}
.upload-ic {
    width: 29px;
    height: 25px;
    padding: 2px 4px;
    background: #5b9cff;
}
.cloud {
    left: 229px;
    top: 245px;
    width: 676px;
    border: 1px solid #3a8fe0;
    background: #ebf5fa;
}
.cloud-head {
    position: relative;
    display: flex;
    height: 109px;
    background: #1b8fd6;
    border-bottom: 1px solid #d8f0ff;
}
.facets {
    position: absolute;
    inset: 0;
    width: 100%;
    height: 100%;
}
.back {
    position: relative;
    width: 74px;
    height: 27px;
    padding-left: 7px;
    gap: 6px;
    border-radius: 0 0 16px 0;
    background: #078ac8;
    color: #fff;
    font-size: 14px;
}
.brand {
    position: absolute;
    left: 41px;
    top: 36px;
    display: flex;
    align-items: center;
    gap: 6px;
    color: #fff;
    font-size: 29px;
    line-height: 40px;
    text-shadow: 2px 2px 1px #0a70b0;
}
.head-btns {
    position: absolute;
    right: 8px;
    top: 12px;
    display: flex;
    gap: 15px;
}
.login {
    position: absolute;
    right: 8px;
    bottom: 15px;
    width: 53px;
    height: 21px;
    justify-content: center;
    border-radius: 2px;
    background: #eef2f5;
    color: #1b8bd8;
    font-weight: bold;
    font-size: 13px;
}
.cloud-bar {
    display: flex;
    align-items: flex-end;
    gap: 5px;
    height: 39px;
    padding: 0 8px 0 20px;
    background: #cdecfe;
    border-bottom: 4px solid #0fa0e0;
}
.tab {
    width: 32px;
    height: 31px;
    justify-content: center;
    margin-right: 6px;
    border: 1px solid #1ba0e4;
    border-bottom: 0;
    border-radius: 4px 4px 0 0;
    background: #fff;
}
.tab.on {
    background: #0fa0e4;
}
.drop {
    width: 75px;
    height: 20px;
    margin-bottom: 5px;
    background: #fff;
    border: 1px solid #c4d4dc;
    border-radius: 2px;
}
.drop.cause {
    width: 80px;
}
.drop::after {
    right: 4px;
    top: 7px;
    border-width: 4px;
    border-bottom: 0;
}
.flat {
    height: 27px;
    width: 54px;
    justify-content: center;
    margin-bottom: 2px;
    border: 1px solid #b8c4cc;
    border-radius: 2px;
    background: #fcfcfc;
    color: #333;
}
.flat.push {
    margin-left: auto;
}
.flat.wide {
    width: 76px;
}
.cloud-list {
    display: flex;
    justify-content: space-between;
    height: 300px;
    overflow: hidden;
    background: #fff;
    border-top: 1px solid #555;
    border-bottom: 1px solid #777;
}
.errors {
    width: 630px;
    align-self: flex-start;
}
.errors tr {
    height: 19px;
}
.errors .picked {
    height: 31px;
    background: #c2dfff;
}
.errors th {
    color: #600060;
}
.errors th.plain {
    color: #000;
}
.errors td.br, .errors td.act {
    padding: 0;
}
.br svg {
    display: block;
    width: 40px;
    height: 18px;
}
.act {
    text-align: center;
}
.errors .act svg {
    display: block;
    width: 16px;
    height: 16px;
    margin: 0 auto;
}
.errors .done {
    color: #b8b8b8;
}
.errors .why {
    color: #006400;
    text-align: center;
}
.errors a {
    color: #00f;
}
.lead {
    width: 14px;
    height: 14px;
    margin-right: 1px;
    vertical-align: middle;
}
.scroll {
    display: flex;
    flex-direction: column;
    align-items: center;
    width: 16px;
    padding: 8px 0;
    background: #f0f0f0;
}
.thumb {
    width: 15px;
    height: 184px;
    margin: auto 0 16px;
    border: 1px solid #aaa;
    border-radius: 2px;
    background: linear-gradient(90deg, #fafafa, #d4d4d4);
}
.cloud-status {
    display: flex;
    align-items: center;
    gap: 4px;
    height: 29px;
    padding: 0 14px 0 8px;
    color: #555;
    font-size: 13px;
}
.drop.long {
    width: 100px;
    height: 24px;
    margin: 0;
    color: #444;
}
.long::after {
    top: 9px;
}
.link-btn {
    gap: 3px;
}
.version {
    display: flex;
    align-items: center;
    gap: 5px;
    margin-left: auto;
    color: #888;
}
.version a {
    color: #1490e0;
    text-decoration: none;
}
.promo {
    display: flex;
    align-items: center;
    gap: 50px;
    height: 43px;
    padding: 0 10px 0 60px;
    background: linear-gradient(115deg, #9fd0ff 0 20%, #8cc6fe 20% 36%, #9ccdff 36% 60%, #8cc6fe 60% 80%, #acd6ff 80%);
    color: #1268c8;
    font-size: 16px;
    font-weight: bold;
    white-space: nowrap;
}
.promo p {
    display: flex;
    align-items: center;
    gap: 8px;
    margin: 0;
}
.promo em {
    color: #e07818;
    font: italic bold 29px/30px "Liberation Sans", sans-serif;
}
.rule {
    flex: 1;
    height: 1px;
    background: linear-gradient(90deg, transparent, #3f9cf4);
}
.rule.flip {
    background: linear-gradient(90deg, #3f9cf4, transparent);
}
.promo button {
    margin-left: -24px;
}
.props {
    left: 1099px;
    top: 172px;
    width: 399px;
    height: 777px;
    padding: 0 7px 7px;
    border: 1px solid #a8b0b4;
    background: linear-gradient(#303236 0 140px, #3cff6c 156px 190px, #303236 206px 590px, #dffafc 606px);
    box-shadow: 0 0 3px 1px #2228;
}
.props-title {
    display: flex;
    align-items: center;
    justify-content: space-between;
    height: 24px;
    background: linear-gradient(90deg, #606264 0 40px, #1a1b1d 120px, #34363a);
    margin: 0 -6px 0 -7px;
    padding-left: 7px;
    color: #000;
}
.props-title span {
    text-shadow: 0 0 4px #bbb;
}
.props-title button {
    width: 17px;
    height: 17px;
    justify-content: center;
    margin-right: 4px;
    border: 1px solid #999;
}
.props-body {
    flex: 1;
    margin: 0 -2px;
    padding: 3px 2px;
    border: 1px solid #888;
    background: #fff;
}
.proptable {
    width: 380px;
}
.proptable thead th {
    height: 24px;
}
.proptable td.name {
    padding-left: 20px;
}
.proptable td.sub {
    padding-left: 2px;
}
.sub svg {
    width: 13px;
    height: 13px;
    margin-right: 5px;
    vertical-align: top;
}
.blue {
    color: #00f;
}
.gray td {
    color: #808080;
}
.active td {
    background: #dfefff;
}
.active .name {
    background: #3399ff;
    color: #fff;
}
.stirrup {
    left: 1182px;
    top: 472px;
    width: 469px;
    height: 360px;
    padding: 0 6px 6px;
    border: 1px solid #555c60;
    border-radius: 7px;
    background: linear-gradient(#46ff70 0 300px, #e8feff 312px) 100% 0, linear-gradient(90deg, #fff 0 305px, #26282c 325px);
    background-size: 8px 100%, 100% 30px;
    background-repeat: no-repeat;
    background-color: #fff;
    box-shadow: 1px 2px 6px #0008;
}
.stirrup-title {
    display: flex;
    justify-content: space-between;
    height: 28px;
    line-height: 27px;
}
.stirrup-title button {
    width: 47px;
    height: 20px;
    justify-content: center;
    border: 1px solid #999;
    border-top: 0;
    border-radius: 0 0 4px 4px;
}
.stirrup-body {
    display: flex;
    flex-direction: column;
    flex: 1;
    border: 1px solid #777;
    background: #f0f0f0;
}
.stirrup-list {
    flex: 1;
    padding: 1px;
    background: #fff;
    border-bottom: 1px solid #a5a5ad;
}
.stirrup-table {
    width: 404px;
}
.stirrup-table .sel {
    background: #dfefff;
}
.stirrup-btns {
    display: flex;
    gap: 7px;
    padding: 9px 12px 9px 5px;
}
.stirrup-btns button {
    width: 73px;
    height: 23px;
    justify-content: center;
    border: 1px solid #777;
    border-radius: 3px;
    background: linear-gradient(#f4f4f4 0 50%, #dcdcdc 50%, #cfcfcf);
}
.stirrup-btns .default {
    margin-left: auto;
    border: 2px solid #2cc0f0;
    background: linear-gradient(#f0f8fd 0 50%, #d0ebfa 50%, #b0dcf4);
}

.marks {
    position: absolute;
    inset: 0;
    width: 100%;
    height: 100%;
    pointer-events: none;
}
```
